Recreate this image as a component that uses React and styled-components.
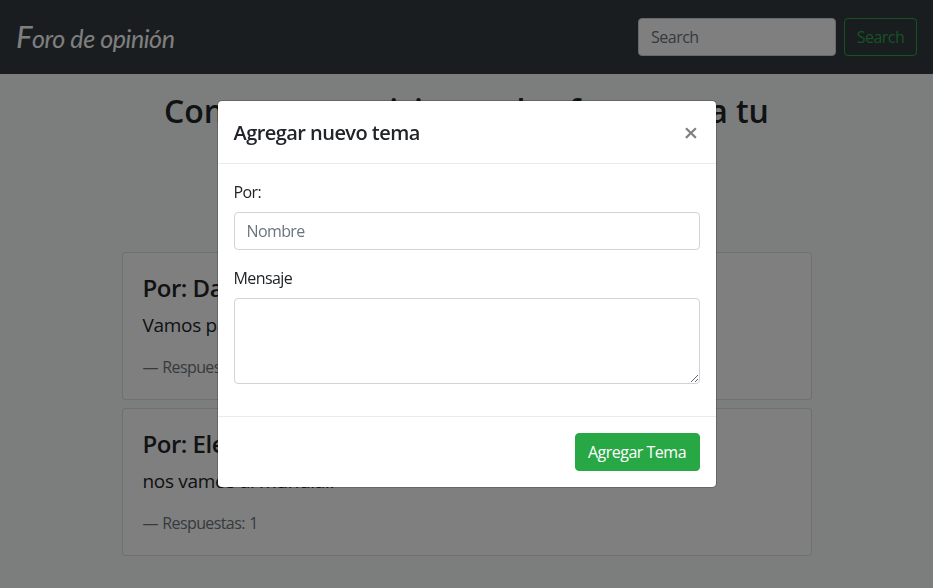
import React from "react";
import styled, { createGlobalStyle } from "styled-components";

const GlobalStyle = createGlobalStyle`
  *, *::before, *::after { box-sizing: border-box; }
  html, body { margin: 0; height: 100%; overflow: hidden; }
  body {
    background: #f9fdfb;
    color: #212529;
    font-family: "Open Sans", "Noto Sans", sans-serif;
    font-size: 16px;
    line-height: 1.5;
  }
  h2, h4, h5, p { margin: 0; }
  button, input, textarea { font: inherit; letter-spacing: inherit; }
`;

const Page = styled.div`
  height: 588px;
  overflow: hidden;
`;

const Navbar = styled.nav`
  display: flex;
  align-items: center;
  justify-content: space-between;
  height: 74px;
  padding: 0 16px;
  background: #343a40;
`;

const Brand = styled.div`
  padding-bottom: 1px;
  color: #fff;
  font-family: "Redressed", "Lato", cursive;
  font-style: italic;
  font-weight: 400;
  font-size: 25px;
  letter-spacing: -0.4px;
  line-height: 44px;
  &::first-letter { font-size: 31px; font-weight: 400; }
`;

const SearchForm = styled.form`
  display: flex;
  gap: 8px;
`;

const Input = styled.input`
  display: block;
  width: ${(p) => p.$width || "100%"};
  height: 38px;
  padding: 6px 12px;
  border: 1px solid #ced4da;
  border-radius: 4px;
  background: #fff;
  letter-spacing: ${(p) => p.$spacing || "0"};
  &::placeholder { color: #6c757d; opacity: 1; }
`;

const Button = styled.button`
  height: 38px;
  width: ${(p) => p.$width};
  padding: 0;
  border: 1px solid #28a745;
  border-radius: 4px;
  background: ${(p) => (p.$outline ? "transparent" : "#28a745")};
  color: ${(p) => (p.$outline ? "#28a745" : "#fff")};
  letter-spacing: ${(p) => p.$spacing || "0"};
  white-space: nowrap;
`;

const Main = styled.main`
  width: 690px;
  margin: 0 auto;
  padding-top: 18px;
`;

const Title = styled.h2`
  height: 160px;
  font-size: 32px;
  font-weight: 560;
  line-height: 38px;
  letter-spacing: -0.03px;
  text-align: center;
`;

const Topics = styled.div`
  display: flex;
  flex-direction: column;
  gap: 8px;
`;

const Card = styled.article`
  height: 148px;
  padding: 20px;
  border: 1px solid rgba(0, 0, 0, 0.125);
  border-radius: 4px;
  background: #fff;
`;

const Author = styled.h4`
  margin-bottom: 8px;
  font-size: 24px;
  font-weight: 560;
  line-height: 29px;
  letter-spacing: -0.5px;
`;

const Message = styled.p`
  margin-bottom: 15px;
  font-size: 19px;
  line-height: 30px;
  letter-spacing: -0.3px;
`;

const Replies = styled.footer`
  color: #6c757d;
  line-height: 24px;
  letter-spacing: -0.6px;
  word-spacing: 0.8px;
`;

const Backdrop = styled.div`
  position: fixed;
  inset: 0;
  display: flex;
  align-items: flex-start;
  justify-content: center;
  padding-top: 100px;
  background: rgba(0, 0, 0, 0.5);
`;

const Dialog = styled.section`
  width: 500px;
  height: 388px;
  border: 1px solid rgba(0, 0, 0, 0.2);
  border-radius: 5px;
  background: #fff;
  background-clip: padding-box;
`;

const DialogHeader = styled.header`
  display: flex;
  justify-content: space-between;
  height: 63px;
  padding: 16px;
  border-bottom: 1px solid #e9ecef;
`;

const DialogTitle = styled.h5`
  font-size: 20px;
  font-weight: 560;
  line-height: 32px;
  letter-spacing: -0.55px;
`;

const Close = styled.button`
  width: 17px;
  height: 30px;
  padding: 0;
  border: 0;
  background: none;
  color: #000;
  opacity: 0.5;
  font-size: 26px;
  font-weight: 600;
  line-height: 27px;
`;

const DialogBody = styled.div`
  display: flex;
  flex-direction: column;
  gap: 16px;
  height: 252px;
  padding: 16px;
`;

const Field = styled.label`
  display: flex;
  flex-direction: column;
  gap: 8px;
  letter-spacing: -0.6px;
`;

const TextArea = styled.textarea`
  width: 100%;
  height: 86px;
  padding: 6px 12px;
  border: 1px solid #ced4da;
  border-radius: 4px;
  background: #fff;
  resize: vertical;
`;

const DialogFooter = styled.footer`
  display: flex;
  justify-content: flex-end;
  padding: 16px;
  border-top: 1px solid #e9ecef;
`;

const topics = [
  { author: "Daniel", message: "Vamos para el mundial.", replies: 2 },
  { author: "Elena", message: "nos vamos al mundial.", replies: 1 },
];

export default function App() {
  return (
    <Page>
      <GlobalStyle />
      <Navbar>
        <Brand>Foro de opinión</Brand>
        <SearchForm>
          <Input $width="198px" $spacing="-0.5px" placeholder="Search" />
          <Button type="button" $outline $width="73px" $spacing="-0.5px">Search</Button>
        </SearchForm>
      </Navbar>
      <Main>
        <Title>Conversa, participa en los foros para tu opinión</Title>
        <Topics>
          {topics.map((t) => (
            <Card key={t.author}>
              <Author>Por: {t.author}</Author>
              <Message>{t.message}</Message>
              <Replies>— Respuestas: {t.replies}</Replies>
            </Card>
          ))}
        </Topics>
      </Main>
      <Backdrop>
        <Dialog role="dialog">
          <DialogHeader>
            <DialogTitle>Agregar nuevo tema</DialogTitle>
            <Close aria-label="Close">×</Close>
          </DialogHeader>
          <DialogBody>
            <Field>
              Por:
              <Input placeholder="Nombre" $spacing="-0.6px" />
            </Field>
            <Field>
              Mensaje
              <TextArea />
            </Field>
          </DialogBody>
          <DialogFooter>
            <Button type="button" $width="125px" $spacing="-0.5px">Agregar Tema</Button>
          </DialogFooter>
        </Dialog>
      </Backdrop>
    </Page>
  );
}
